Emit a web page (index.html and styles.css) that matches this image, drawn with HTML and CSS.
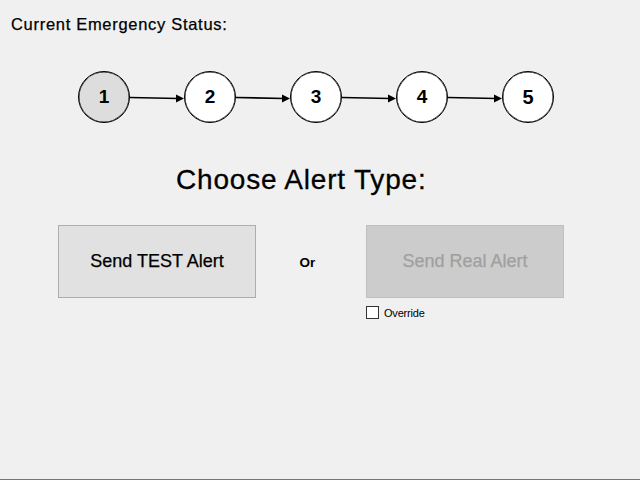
FILE: index.html
```html
<!DOCTYPE html>
<html>
<head>
<meta charset="utf-8">
<link rel="stylesheet" href="styles.css">
</head>
<body>
<div class="window">
  <div class="status-label">Current Emergency Status:</div>
  <div class="steps">
    <div class="step active">1</div>
    <svg class="arrow" width="54" height="12" viewBox="0 0 54 12"><line x1="0" y1="5.5" x2="48" y2="6.5" stroke="#000" stroke-width="1.6"/><polygon points="46,2.5 54,6.6 46,10.5" fill="#000"/></svg>
    <div class="step">2</div>
    <svg class="arrow" width="54" height="12" viewBox="0 0 54 12"><line x1="0" y1="5.5" x2="48" y2="6.5" stroke="#000" stroke-width="1.6"/><polygon points="46,2.5 54,6.6 46,10.5" fill="#000"/></svg>
    <div class="step">3</div>
    <svg class="arrow" width="54" height="12" viewBox="0 0 54 12"><line x1="0" y1="5.5" x2="48" y2="6.5" stroke="#000" stroke-width="1.6"/><polygon points="46,2.5 54,6.6 46,10.5" fill="#000"/></svg>
    <div class="step">4</div>
    <svg class="arrow" width="54" height="12" viewBox="0 0 54 12"><line x1="0" y1="5.5" x2="48" y2="6.5" stroke="#000" stroke-width="1.6"/><polygon points="46,2.5 54,6.6 46,10.5" fill="#000"/></svg>
    <div class="step last">5</div>
  </div>
  <h1 class="heading">Choose Alert Type:</h1>
  <div class="alerts">
    <button class="btn btn-test">Send TEST Alert</button>
    <div class="or">Or</div>
    <div class="real-col">
      <button class="btn btn-real" disabled>Send Real Alert</button>
      <label class="override"><span class="checkbox"></span>Override</label>
    </div>
  </div>
</div>
</body>
</html>
```
FILE: styles.css
```css
html, body {
  margin: 0;
  padding: 0;
}
body {
  background: #f0f0f0;
  font-family: "Liberation Sans", Arial, sans-serif;
  color: #000;
}
.window {
  height: 479px;
  border-bottom: 1px solid #4f7eab;
  overflow: hidden;
}
.status-label {
  font-size: 16.5px;
  line-height: 18px;
  letter-spacing: 0.7px;
  padding: 15px 0 0 11px;
  -webkit-text-stroke: 0.25px #000;
}
.steps {
  display: flex;
  align-items: center;
  margin: 38px 0 0 78px;
}
.step {
  flex-shrink: 0;
  width: 52px;
  height: 52px;
  box-sizing: border-box;
  border: 1px solid #000;
  box-shadow: inset 0 0 0 0.5px #222;
  border-radius: 50%;
  background: #fff;
  display: flex;
  align-items: center;
  justify-content: center;
  font-weight: bold;
  font-size: 19px;
}
.step.active {
  background: #dddddd;
}
.step.last {
  font-size: 20px;
}
.arrow {
  display: block;
  flex-shrink: 0;
  margin-top: 1px;
}
.heading {
  margin: 41px 0 0 176px;
  font-size: 28px;
  font-weight: normal;
  line-height: 32px;
  letter-spacing: 0.8px;
  -webkit-text-stroke: 0.3px #000;
}
.alerts {
  display: flex;
  align-items: flex-start;
  margin: 29px 0 0 58px;
}
.btn {
  width: 198px;
  height: 73px;
  font-family: "Liberation Sans", Arial, sans-serif;
  font-size: 18px;
  padding: 0;
  margin: 0;
}
.btn-test {
  background: #e1e1e1;
  border: 1px solid #adadad;
  color: #000;
  -webkit-text-stroke: 0.25px #000;
}
.btn-real {
  background: #cccccc;
  border: 1px solid #bfbfbf;
  color: #a0a0a0;
  -webkit-text-stroke: 0.25px #a0a0a0;
}
.or {
  width: 110px;
  box-sizing: border-box;
  padding-right: 7px;
  text-align: center;
  font-weight: bold;
  font-size: 13.5px;
  line-height: 15px;
  margin-top: 30px;
}
.real-col {
  display: flex;
  flex-direction: column;
}
.override {
  display: flex;
  align-items: center;
  font-size: 11px;
  margin-top: 8px;
  letter-spacing: -0.2px;
}
.checkbox {
  width: 11px;
  height: 11px;
  border: 1px solid #333;
  background: #fff;
  margin-right: 5px;
}
```
